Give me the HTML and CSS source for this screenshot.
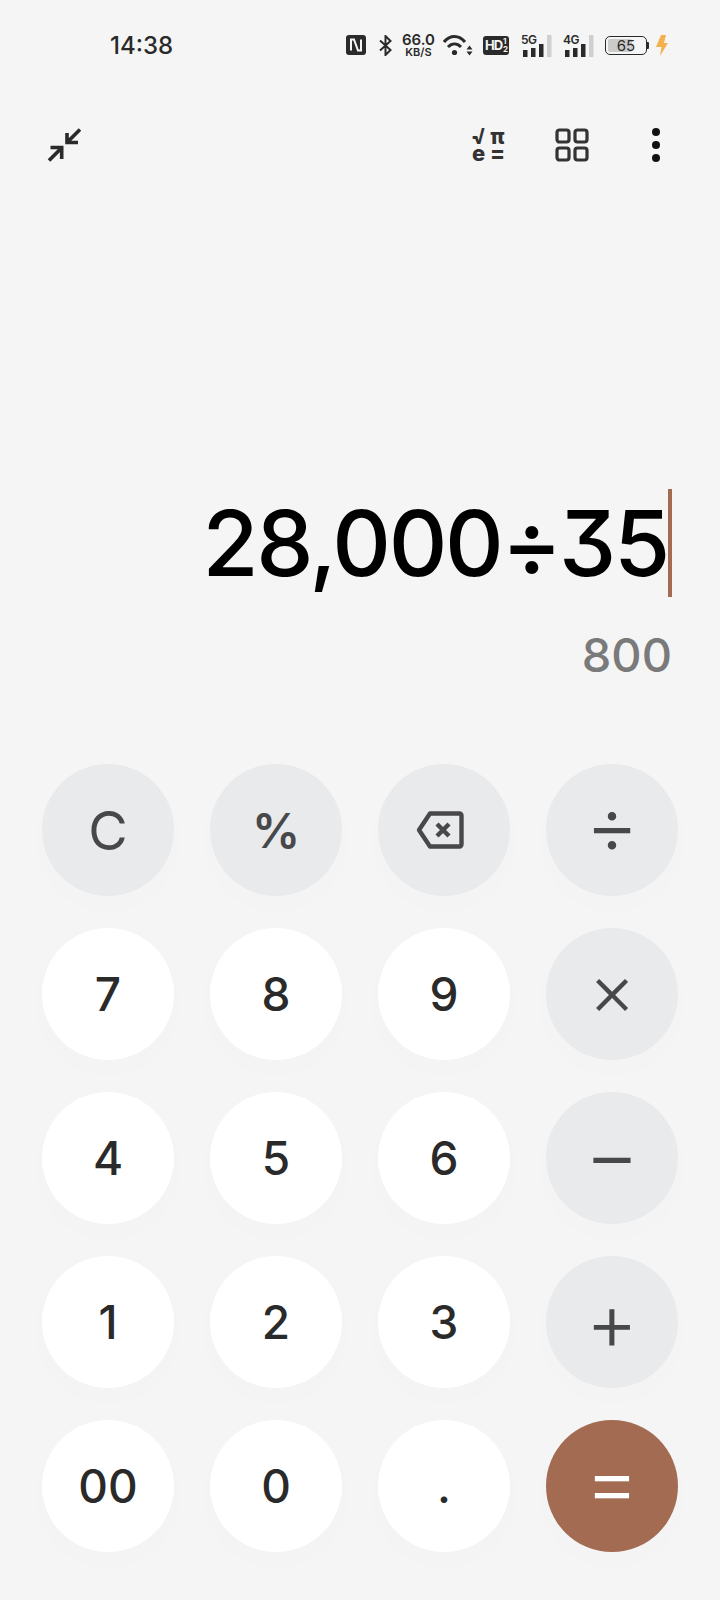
FILE: index.html
```html
<!DOCTYPE html>
<html lang="en">
<head>
	<meta charset="UTF-8">
	<title>Calculator</title>
	<link rel="stylesheet" href="styles.css">
</head>
<body>
	<div class="page">
		<div class="statusbar">
			<span class="time">14:38</span>
			<div class="status-icons">
				<svg class="ic-nfc" width="20" height="20" viewBox="0 0 20 20">
					<rect width="20" height="20" rx="3" fill="#2a2a2a"/>
					<path d="M5 15.5V4.5H8L12 15.5H15V4.5" fill="none" stroke="#f5f5f5" stroke-width="2"/>
				</svg>
				<svg class="ic-bt" width="13" height="21" viewBox="0 0 13 21">
					<path d="M1 5.5L11.5 15L6.5 20V1L11.5 6L1 15.5" fill="none" stroke="#2a2a2a" stroke-width="2"/>
				</svg>
				<div class="speed">
					<span class="speed-num">66.0</span>
					<span class="speed-unit">KB/S</span>
				</div>
				<svg class="ic-wifi" width="30" height="22" viewBox="0 0 30 22">
					<path d="M1 8C7 0.5 16 0.5 22 8M5 13C9 9 14 9 18 13" fill="none" stroke="#2a2a2a" stroke-width="3"/>
					<circle cx="11.5" cy="18.5" r="2.6" fill="#2a2a2a"/>
					<path d="M23.5 15.5H29.5L26.5 11.5ZM23.5 17.5H29.5L26.5 21.5Z" fill="#2a2a2a"/>
				</svg>
				<div class="hd">
					<span class="hd-main">HD</span>
					<span class="hd-frac"><span>1</span><span>2</span></span>
				</div>
				<svg class="ic-sig" width="31" height="24" viewBox="0 0 31 24">
					<text class="sig-text" x="0" y="11">5G</text>
					<rect x="2" y="17" width="4.5" height="7" fill="#2a2a2a"/>
					<rect x="10" y="15" width="4.5" height="9" fill="#2a2a2a"/>
					<rect x="18" y="11" width="4.5" height="13" fill="#2a2a2a"/>
					<rect x="26" y="2" width="4.5" height="22" fill="#cfcfcf"/>
				</svg>
				<svg class="ic-sig" width="31" height="24" viewBox="0 0 31 24">
					<text class="sig-text" x="0" y="11">4G</text>
					<rect x="2" y="17" width="4.5" height="7" fill="#2a2a2a"/>
					<rect x="10" y="15" width="4.5" height="9" fill="#2a2a2a"/>
					<rect x="18" y="11" width="4.5" height="13" fill="#2a2a2a"/>
					<rect x="26" y="2" width="4.5" height="22" fill="#cfcfcf"/>
				</svg>
				<div class="battery">
					<div class="battery-body">
						<div class="battery-fill"></div>
						<span class="battery-num">65</span>
					</div>
					<div class="battery-nub"></div>
				</div>
				<svg class="ic-bolt" width="13" height="21" viewBox="0 0 13 21">
					<path d="M6 0H11L9 8H13L5 21L6.5 12H1Z" fill="#f3b24d"/>
				</svg>
			</div>
		</div>

		<div class="toolbar">
			<svg width="34" height="34" viewBox="0 0 34 34">
				<path d="M33 1.5L20.5 14M20 5V14.5H31M2 32.5L14.5 20M3.5 19.5H14.7V31" fill="none" stroke="#2a2a2a" stroke-width="3.6"/>
			</svg>
			<div class="tools">
				<div class="formula">
					<span>√</span><span>π</span><span>e</span><span>=</span>
				</div>
				<svg width="34" height="34" viewBox="0 0 34 34">
					<rect x="2" y="2" width="12" height="12" rx="2.5" fill="none" stroke="#333" stroke-width="3.2"/>
					<rect x="20" y="2" width="12" height="12" rx="2.5" fill="none" stroke="#333" stroke-width="3.2"/>
					<rect x="2" y="20" width="12" height="12" rx="2.5" fill="none" stroke="#333" stroke-width="3.2"/>
					<rect x="20" y="20" width="12" height="12" rx="2.5" fill="none" stroke="#333" stroke-width="3.2"/>
				</svg>
				<div class="dots"><i></i><i></i><i></i></div>
			</div>
		</div>

		<div class="display">
			<div class="expr-row">
				<span class="expr">28,000÷35</span>
				<span class="caret"></span>
			</div>
			<div class="result">800</div>
		</div>

		<div class="keypad">
			<div class="key op txt-c">C</div>
			<div class="key op txt-pct">%</div>
			<div class="key op key-back">
				<svg width="48" height="38" viewBox="0 0 48 38">
					<path d="M14 2.5H43.5A2 2 0 0 1 45.5 4.5V33.5A2 2 0 0 1 43.5 35.5H14L3 19Z" fill="none" stroke="#48484a" stroke-width="4.4" stroke-linejoin="round"/>
					<path d="M21 13L33 25M33 13L21 25" fill="none" stroke="#48484a" stroke-width="4.4"/>
				</svg>
			</div>
			<div class="key op sym s-div">÷</div>
			<div class="key">7</div>
			<div class="key">8</div>
			<div class="key">9</div>
			<div class="key op sym s-mul">×</div>
			<div class="key">4</div>
			<div class="key">5</div>
			<div class="key">6</div>
			<div class="key op sym s-sub">−</div>
			<div class="key">1</div>
			<div class="key">2</div>
			<div class="key">3</div>
			<div class="key op sym s-add">+</div>
			<div class="key">00</div>
			<div class="key">0</div>
			<div class="key">.</div>
			<div class="key equal sym s-eq">=</div>
		</div>
	</div>
</body>
</html>
```

FILE: styles.css
```css
*{
	margin: 0;
	padding: 0;
	box-sizing: border-box;
}
body{
	background-color: #f5f5f5;
	font-family: "Inter", "Noto Sans", sans-serif;
	color: #2a2a2a;
}
.page{
	width: 720px;
	height: 1600px;
	display: flex;
	flex-direction: column;
}

/* status bar */
.statusbar{
	height: 90px;
	padding: 0 52px 0 110px;
	display: flex;
	align-items: center;
	justify-content: space-between;
}
.time{
	font-size: 24px;
	font-weight: 500;
}
.status-icons{
	display: flex;
	align-items: center;
	gap: 10px;
}
.ic-nfc{
	margin-right: 3px;
}
.speed{
	width: 33px;
	margin-right: -2px;
	display: flex;
	flex-direction: column;
	align-items: center;
	font-weight: 600;
}
.speed-num{
	font-size: 15px;
	line-height: 15px;
}
.speed-unit{
	font-size: 11px;
	line-height: 11px;
}
.hd{
	width: 26px;
	height: 19px;
	margin-right: 2px;
	padding-left: 2px;
	display: flex;
	align-items: center;
	background-color: #2a2a2a;
	border-radius: 3px;
	color: #f5f5f5;
	font-weight: 700;
}
.hd-main{
	font-size: 13px;
	letter-spacing: -1px;
}
.hd-frac{
	margin-left: 1px;
	display: flex;
	flex-direction: column;
	font-size: 8px;
	line-height: 8px;
}
.sig-text{
	font-family: "Inter", sans-serif;
	font-size: 12px;
	font-weight: 600;
	fill: #2a2a2a;
	letter-spacing: -0.5px;
}
.ic-sig{
	margin-right: 1px;
}
.battery{
	display: flex;
	align-items: center;
	margin-right: -4px;
}
.battery-body{
	position: relative;
	width: 42px;
	height: 19px;
	border: 1.5px solid #2a2a2a;
	border-radius: 5px;
	display: flex;
	align-items: center;
	justify-content: center;
}
.battery-fill{
	position: absolute;
	left: 2px;
	top: 2px;
	bottom: 2px;
	width: 24px;
	background-color: #cbcbcb;
	border-radius: 2px;
}
.battery-num{
	position: relative;
	font-size: 15px;
	font-weight: 400;
}
.battery-nub{
	width: 2px;
	height: 7px;
	background-color: #2a2a2a;
	border-radius: 0 1px 1px 0;
}

/* tool row */
.toolbar{
	height: 34px;
	margin-top: 38px;
	padding: 0 59px 0 47px;
	display: flex;
	align-items: center;
	justify-content: space-between;
}
.tools{
	display: flex;
	align-items: center;
	gap: 48px;
}
.formula{
	width: 38px;
	height: 34px;
	display: grid;
	grid-template-columns: 19px 19px;
	grid-template-rows: 17px 17px;
	place-items: center;
	font-size: 22px;
	line-height: 17px;
	font-weight: 800;
	color: #333;
}
.dots{
	width: 10px;
	height: 34px;
	margin-left: 14px;
	display: flex;
	flex-direction: column;
	justify-content: space-between;
}
.dots i{
	width: 8px;
	height: 8px;
	margin: 0 1px;
	border-radius: 50%;
	background-color: #111;
}

/* expression */
.display{
	margin-top: auto;
	margin-bottom: 81px;
	padding-right: 48px;
	display: flex;
	flex-direction: column;
	align-items: flex-end;
}
.expr-row{
	height: 108px;
	display: flex;
	align-items: center;
}
.expr{
	font-size: 91px;
	font-weight: 500;
	line-height: 108px;
	color: #000;
	letter-spacing: -2.3px;
	font-feature-settings: "cv09";
}
.caret{
	width: 4px;
	height: 108px;
	background-color: #a36b52;
}
.result{
	margin-top: 30px;
	height: 56px;
	font-size: 47px;
	font-weight: 500;
	line-height: 56px;
	color: #7a7a7a;
}

/* keys */
.keypad{
	padding: 0 42px 48px;
	display: grid;
	grid-template-columns: repeat(4, 132px);
	grid-auto-rows: 132px;
	gap: 32px 36px;
}
.key{
	display: flex;
	align-items: center;
	justify-content: center;
	border-radius: 50%;
	background-color: #fff;
	box-shadow: 0 10px 40px rgba(0,0,0,0.01);
	font-size: 46px;
	font-weight: 450;
	color: #2a2a2a;
}
.op{
	background-color: #e9eaec;
	color: #48484a;
}
.equal{
	background-color: #a36b52;
	color: #fff;
}
.key-back{
	padding-right: 8px;
}
.txt-c{
	font-size: 54px;
	font-weight: 400;
}
.txt-pct{
	font-size: 48px;
	font-weight: 600;
}
.sym{
	font-weight: 300;
}
.s-div{
	font-size: 82px;
	padding-bottom: 12px;
}
.s-mul{
	font-size: 72px;
	font-weight: 350;
	padding-bottom: 12px;
}
.s-sub{
	font-size: 84px;
	padding-bottom: 9px;
}
.s-add{
	font-size: 80px;
	padding-bottom: 4px;
}
.s-eq{
	font-size: 84px;
	padding-bottom: 12px;
}
```
